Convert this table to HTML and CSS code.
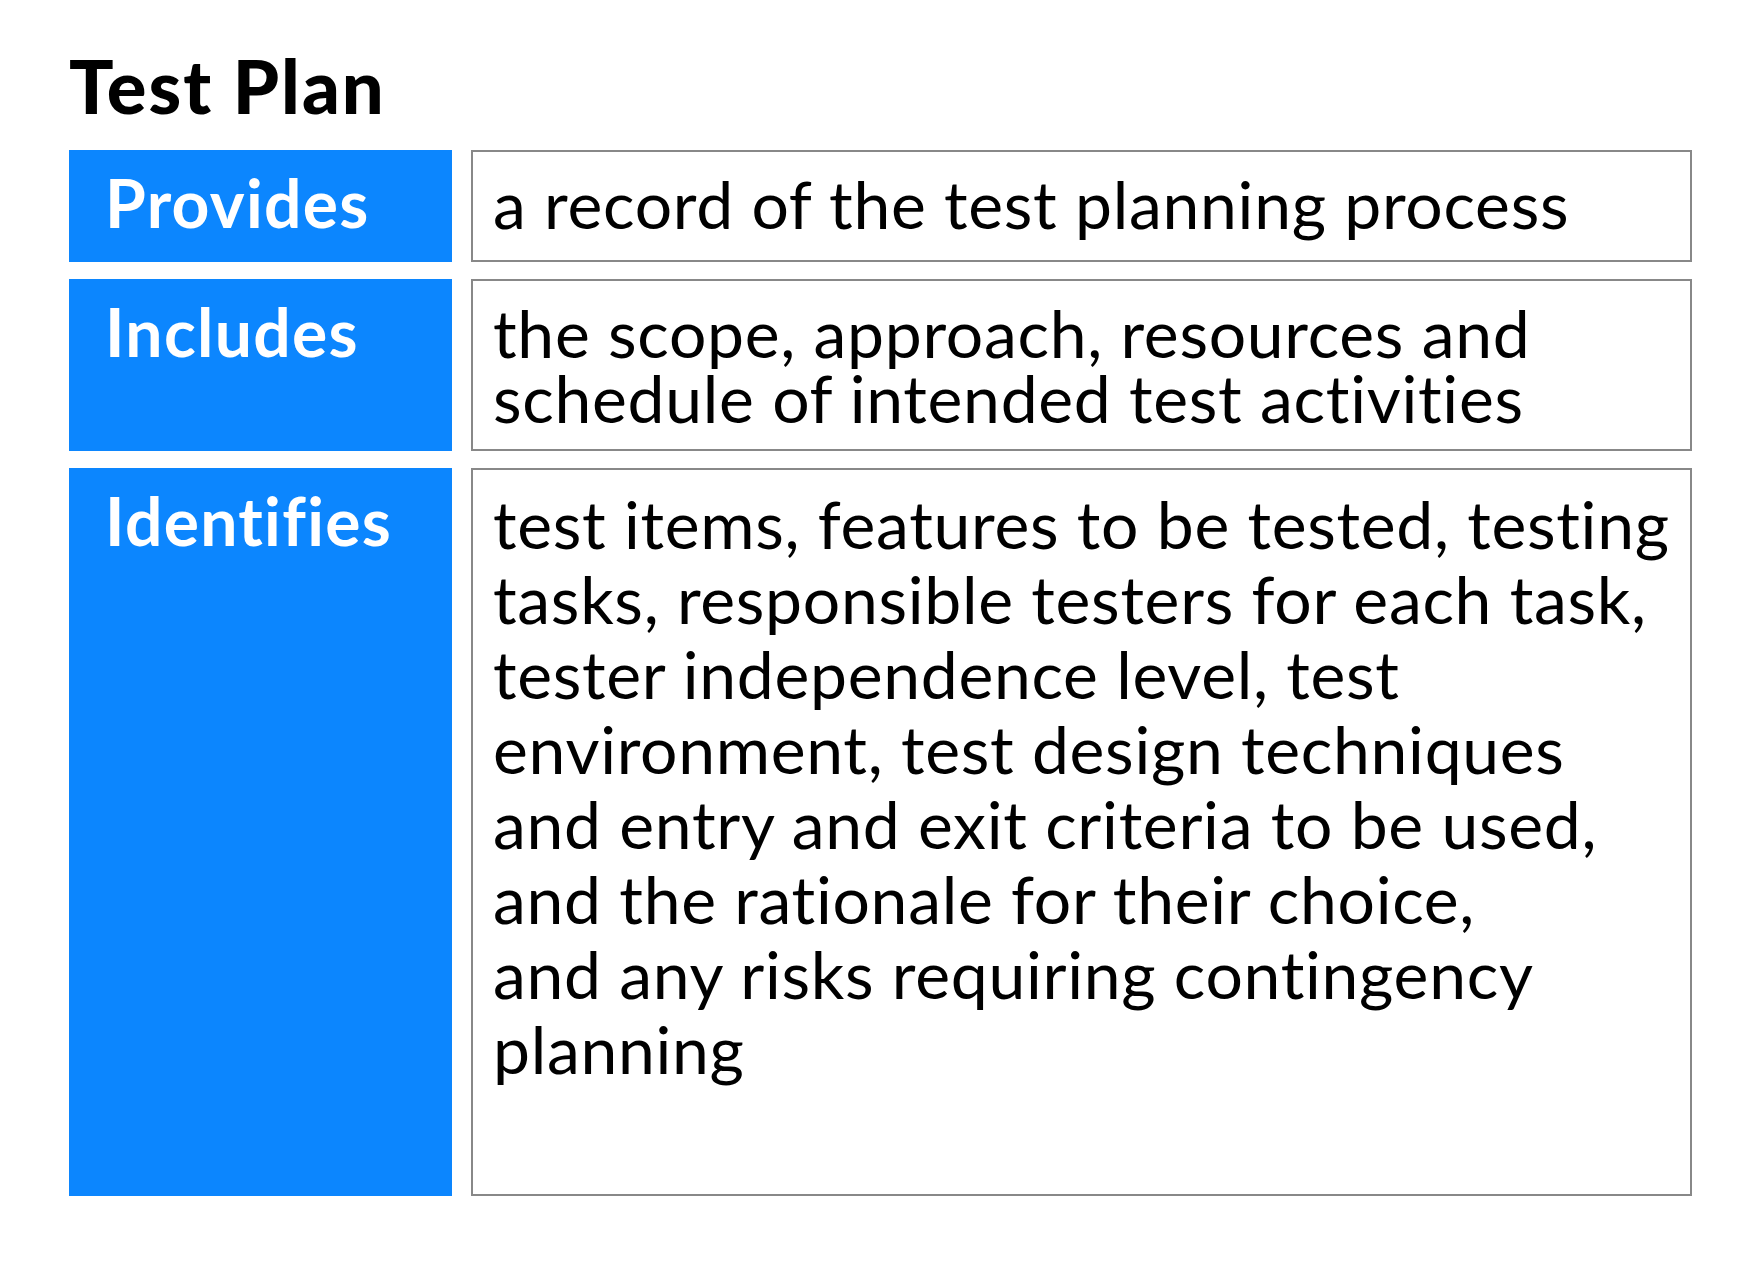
FILE: index.html
```html
<!DOCTYPE html>
<html lang="en">
<head>
<meta charset="utf-8">
<title>Test Plan</title>
<link rel="stylesheet" href="styles.css">
</head>
<body>
<main class="page">
  <h1 class="title">Test Plan</h1>
  <div class="table">
    <div class="row row-1">
      <div class="label">Provides</div>
      <div class="cell">a record of the test planning process</div>
    </div>
    <div class="row row-2">
      <div class="label">Includes</div>
      <div class="cell">the scope, approach, resources and<br>schedule of intended test activities</div>
    </div>
    <div class="row row-3">
      <div class="label">Identifies</div>
      <div class="cell cell-tall">test items, features to be tested, testing<br>tasks, responsible testers for each task,<br>tester independence level, test<br>environment, test design techniques<br>and entry and exit criteria to be used,<br>and the rationale for their choice,<br>and any risks requiring contingency<br>planning</div>
    </div>
  </div>
</main>
</body>
</html>
```

FILE: styles.css
```css
html, body {
  margin: 0;
  padding: 0;
  background: #ffffff;
}

.page {
  padding: 46px 0 0 69px;
  font-family: "Lato", "Open Sans", "Liberation Sans", sans-serif;
  color: #000;
}

.title {
  margin: 0 0 24px 0;
  font-size: 74px;
  line-height: 80px;
  font-weight: 900;
  letter-spacing: 2px;
}

.table {
  display: flex;
  flex-direction: column;
  gap: 17px;
  width: 1623px;
}

.row {
  display: grid;
  grid-template-columns: 383px 1221px;
  column-gap: 19px;
}

.row-1 { height: 112px; }
.row-2 { height: 172px; }
.row-3 { height: 728px; }

.label {
  background: #0c86fe;
  color: #ffffff;
  font-weight: 700;
  font-size: 66px;
  line-height: 65px;
  padding: 20px 0 0 36px;
  box-sizing: border-box;
  letter-spacing: 1.3px;
}

.cell {
  border: 2px solid #888888;
  box-sizing: border-box;
  padding: 19px 0 0 20px;
  font-size: 66px;
  line-height: 65px;
  font-weight: 400;
  white-space: nowrap;
  letter-spacing: 0.7px;
}

.cell-tall {
  padding-top: 16px;
  line-height: 75px;
}
```
